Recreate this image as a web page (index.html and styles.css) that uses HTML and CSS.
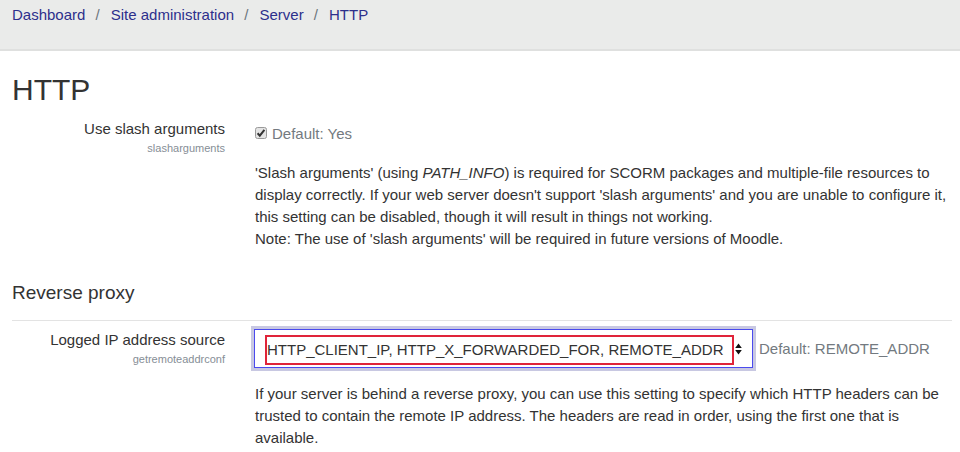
FILE: index.html
```html
<!DOCTYPE html>
<html>
<head>
<meta charset="utf-8">
<link rel="stylesheet" href="styles.css">
</head>
<body>
<header class="topbar">
  <nav class="crumbs">
    <a href="#">Dashboard</a><span class="sep">/</span>
    <a href="#">Site administration</a><span class="sep">/</span>
    <a href="#">Server</a><span class="sep">/</span>
    <a href="#">HTTP</a>
  </nav>
</header>
<main class="page">
  <h2 class="title">HTTP</h2>
  <div class="setting">
    <div class="label">
      <div class="name">Use slash arguments</div>
      <div class="key">slasharguments</div>
    </div>
    <div class="body">
      <div class="ctrl first">
        <svg class="check" width="12" height="12" viewBox="0 0 12 12">
          <rect x="0.5" y="0.5" width="11" height="11" rx="2" fill="#e4e4e4" stroke="#9a9a9a"/>
          <path d="M2.6 6.2 L4.8 8.6 L9.4 2.8" fill="none" stroke="#333" stroke-width="2"/>
        </svg>
        <span class="default">Default: Yes</span>
      </div>
      <div class="desc">'Slash arguments' (using <em>PATH_INFO</em>) is required for SCORM packages and multiple-file resources to display correctly. If your web server doesn't support 'slash arguments' and you are unable to configure it, this setting can be disabled, though it will result in things not working.<br>Note: The use of 'slash arguments' will be required in future versions of Moodle.</div>
    </div>
  </div>
  <h3 class="section">Reverse proxy</h3>
  <div class="setting bordered">
    <div class="label">
      <div class="name">Logged IP address source</div>
      <div class="key">getremoteaddrconf</div>
    </div>
    <div class="body">
      <div class="ctrl">
        <div class="select">
          <span class="value">HTTP_CLIENT_IP, HTTP_X_FORWARDED_FOR, REMOTE_ADDR</span>
          <svg class="arrows" width="7" height="12" viewBox="0 0 7 12"><path d="M3.5 0.5 L6.8 5 L0.2 5 Z M0.2 7 L6.8 7 L3.5 11.5 Z" fill="#111"/></svg>
        </div>
        <span class="default">Default: REMOTE_ADDR</span>
      </div>
      <div class="desc">If your server is behind a reverse proxy, you can use this setting to specify which HTTP headers can be trusted to contain the remote IP address. The headers are read in order, using the first one that is available.</div>
    </div>
  </div>
</main>
</body>
</html>
```
FILE: styles.css
```css
html, body { margin: 0; padding: 0; background: #fff; }
body { font-family: "Liberation Sans", Arial, sans-serif; color: #373a3c; font-size: 15px; }
.topbar { background: #eaebea; height: 49px; border-bottom: 2px solid #dfe0df; }
.crumbs { padding: 5px 12px 0; line-height: 20px; font-size: 15px; }
.crumbs a { color: #2d2f8c; text-decoration: none; }
.crumbs .sep { color: #6c757d; padding: 0 7px 0 10px; }
.page { padding: 0 8px 0 12px; }
.title { margin: 21px 0 0; font-size: 30px; line-height: 36px; font-weight: 400; color: #333; }
.setting { display: grid; grid-template-columns: 213px 1fr; column-gap: 30px; }
.label { text-align: right; }
.name { font-size: 15px; line-height: 20px; color: #333; }
.key { font-size: 11px; line-height: 16px; color: #868e96; margin-top: 1px; }
.setting:first-of-type .label { padding-top: 11px; }
.ctrl { display: flex; align-items: center; }
.ctrl.first { padding-top: 15px; height: 20px; }
.check { margin: 0 5px 0 0; }
.default { color: #737a80; font-size: 15px; }
.desc { margin-top: 19px; font-size: 15px; line-height: 22px; color: #333; }
.section { margin: 31px 0 0; font-size: 19px; line-height: 24px; font-weight: 400; color: #333; padding-bottom: 15px; border-bottom: 1px solid #e3e3e3; }
.bordered { padding-top: 8px; }
.bordered .label { padding-top: 1px; }
.bordered .ctrl { margin-left: -1px; }
.select { position: relative; display: flex; align-items: center; box-sizing: border-box; width: 499px; height: 39px; border: 1px solid #4a4aee; box-shadow: 0 0 0 3px #c8c8e2; padding: 0 0 0 10px; }
.value { display: inline-block; box-sizing: border-box; height: 30px; line-height: 26px; padding: 0 9px 0 0; border: 2px solid #e0243a; font-size: 15px; color: #333; margin-top: 2px; }
.arrows { margin-left: 1px; }
.bordered .default { margin-left: 6px; }
.bordered .desc { margin-top: 15px; }
```
